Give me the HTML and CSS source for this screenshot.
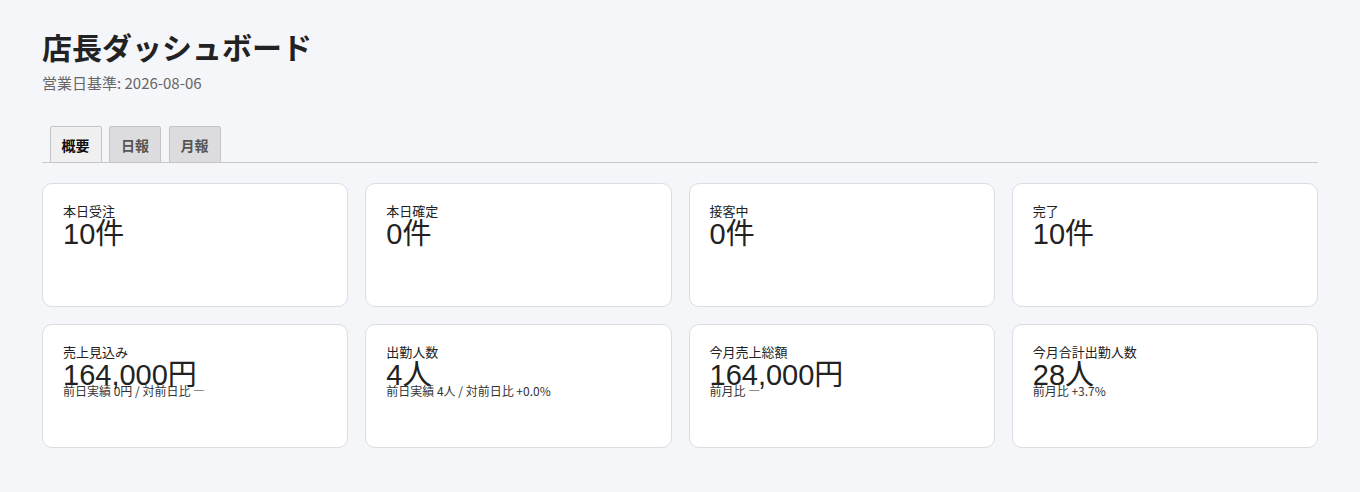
FILE: index.html
```html
<!DOCTYPE html>
<html lang="ja">
<head>
  <meta charset="UTF-8" />
  <meta name="viewport" content="width=device-width, initial-scale=1.0"/>
  <title>店長ダッシュボード</title>
  <link rel="stylesheet" href="styles.css">
</head>
<body>

  <!-- ヘッダー -->
  <div class="page">
    <h1 class="page-title">店長ダッシュボード</h1>
    <p class="page-sub">営業日基準: 2026-08-06</p>

    <div class="tabs">
      <button class="tab active">概要</button>
      <button class="tab">日報</button>
      <button class="tab">月報</button>
    </div>

    <!-- 概要カード -->
    <div class="cards">
      <div class="card">
        <div class="card-label">本日受注</div>
        <div class="card-value">10件</div>
      </div>
      <div class="card">
        <div class="card-label">本日確定</div>
        <div class="card-value">0件</div>
      </div>
      <div class="card">
        <div class="card-label">接客中</div>
        <div class="card-value">0件</div>
      </div>
      <div class="card">
        <div class="card-label">完了</div>
        <div class="card-value">10件</div>
      </div>

      <div class="card">
        <div class="card-label">売上見込み</div>
        <div class="card-value">164,000円</div>
        <div class="card-sub">前日実績 0円 / 対前日比 —</div>
      </div>
      <div class="card">
        <div class="card-label">出勤人数</div>
        <div class="card-value">4人</div>
        <div class="card-sub">前日実績 4人 / 対前日比 +0.0%</div>
      </div>
      <div class="card">
        <div class="card-label">今月売上総額</div>
        <div class="card-value">164,000円</div>
        <div class="card-sub">前月比 —</div>
      </div>
      <div class="card">
        <div class="card-label">今月合計出勤人数</div>
        <div class="card-value">28人</div>
        <div class="card-sub">前月比 +3.7%</div>
      </div>
    </div>
  </div>

</body>
</html>
```

FILE: styles.css
```css
body {
  font-family: "Noto Sans", "Noto Sans CJK JP", sans-serif;
  background: #f5f6fa;
  color: #222;
  margin: 0;
  padding: 0;
}

.page {
  padding: 24px 42px;
}

.page-title {
  font-family: "Noto Sans CJK JP", sans-serif;
  font-size: 30px;
  font-weight: bold;
  line-height: normal;
  margin: 0;
  color: #222;
}

.page-sub {
  font-family: "Noto Sans CJK JP", sans-serif;
  font-size: 15px;
  color: #666;
  margin: 4px 0 0;
}

.tabs {
  display: flex;
  gap: 7.5px;
  margin-top: 33px;
  padding-left: 7.5px;
  border-bottom: 1px solid #c8c8cc;
}

.tab {
  font-family: "Noto Sans CJK JP", sans-serif;
  font-size: 14px;
  font-weight: bold;
  width: 52px;
  height: 37px;
  padding: 0;
  margin-bottom: -1px;
  border: 1px solid #c4c4c8;
  border-radius: 2px 2px 0 0;
  background: #dcdcde;
  color: #555;
  cursor: pointer;
}

.tab.active {
  background: #f0f0f0;
  color: #111;
}

.cards {
  display: grid;
  grid-template-columns: repeat(4, 1fr);
  gap: 17px;
  margin-top: 20px;
}

.card {
  box-sizing: border-box;
  height: 124px;
  padding: 17px 20px;
  background: white;
  border: 1px solid #dcdde2;
  border-radius: 10px;
}

.card-label {
  font-family: "Noto Sans CJK JP", sans-serif;
  font-size: 13px;
  line-height: 20px;
  margin-bottom: 5px;
  color: #222;
}

.card-value {
  font-family: "Liberation Sans", "Noto Sans CJK JP", sans-serif;
  font-size: 29px;
  line-height: 16px;
  color: #222;
}

.card-sub {
  font-family: "Noto Sans CJK JP", sans-serif;
  font-size: 12px;
  line-height: 16px;
  color: #333;
}
```
